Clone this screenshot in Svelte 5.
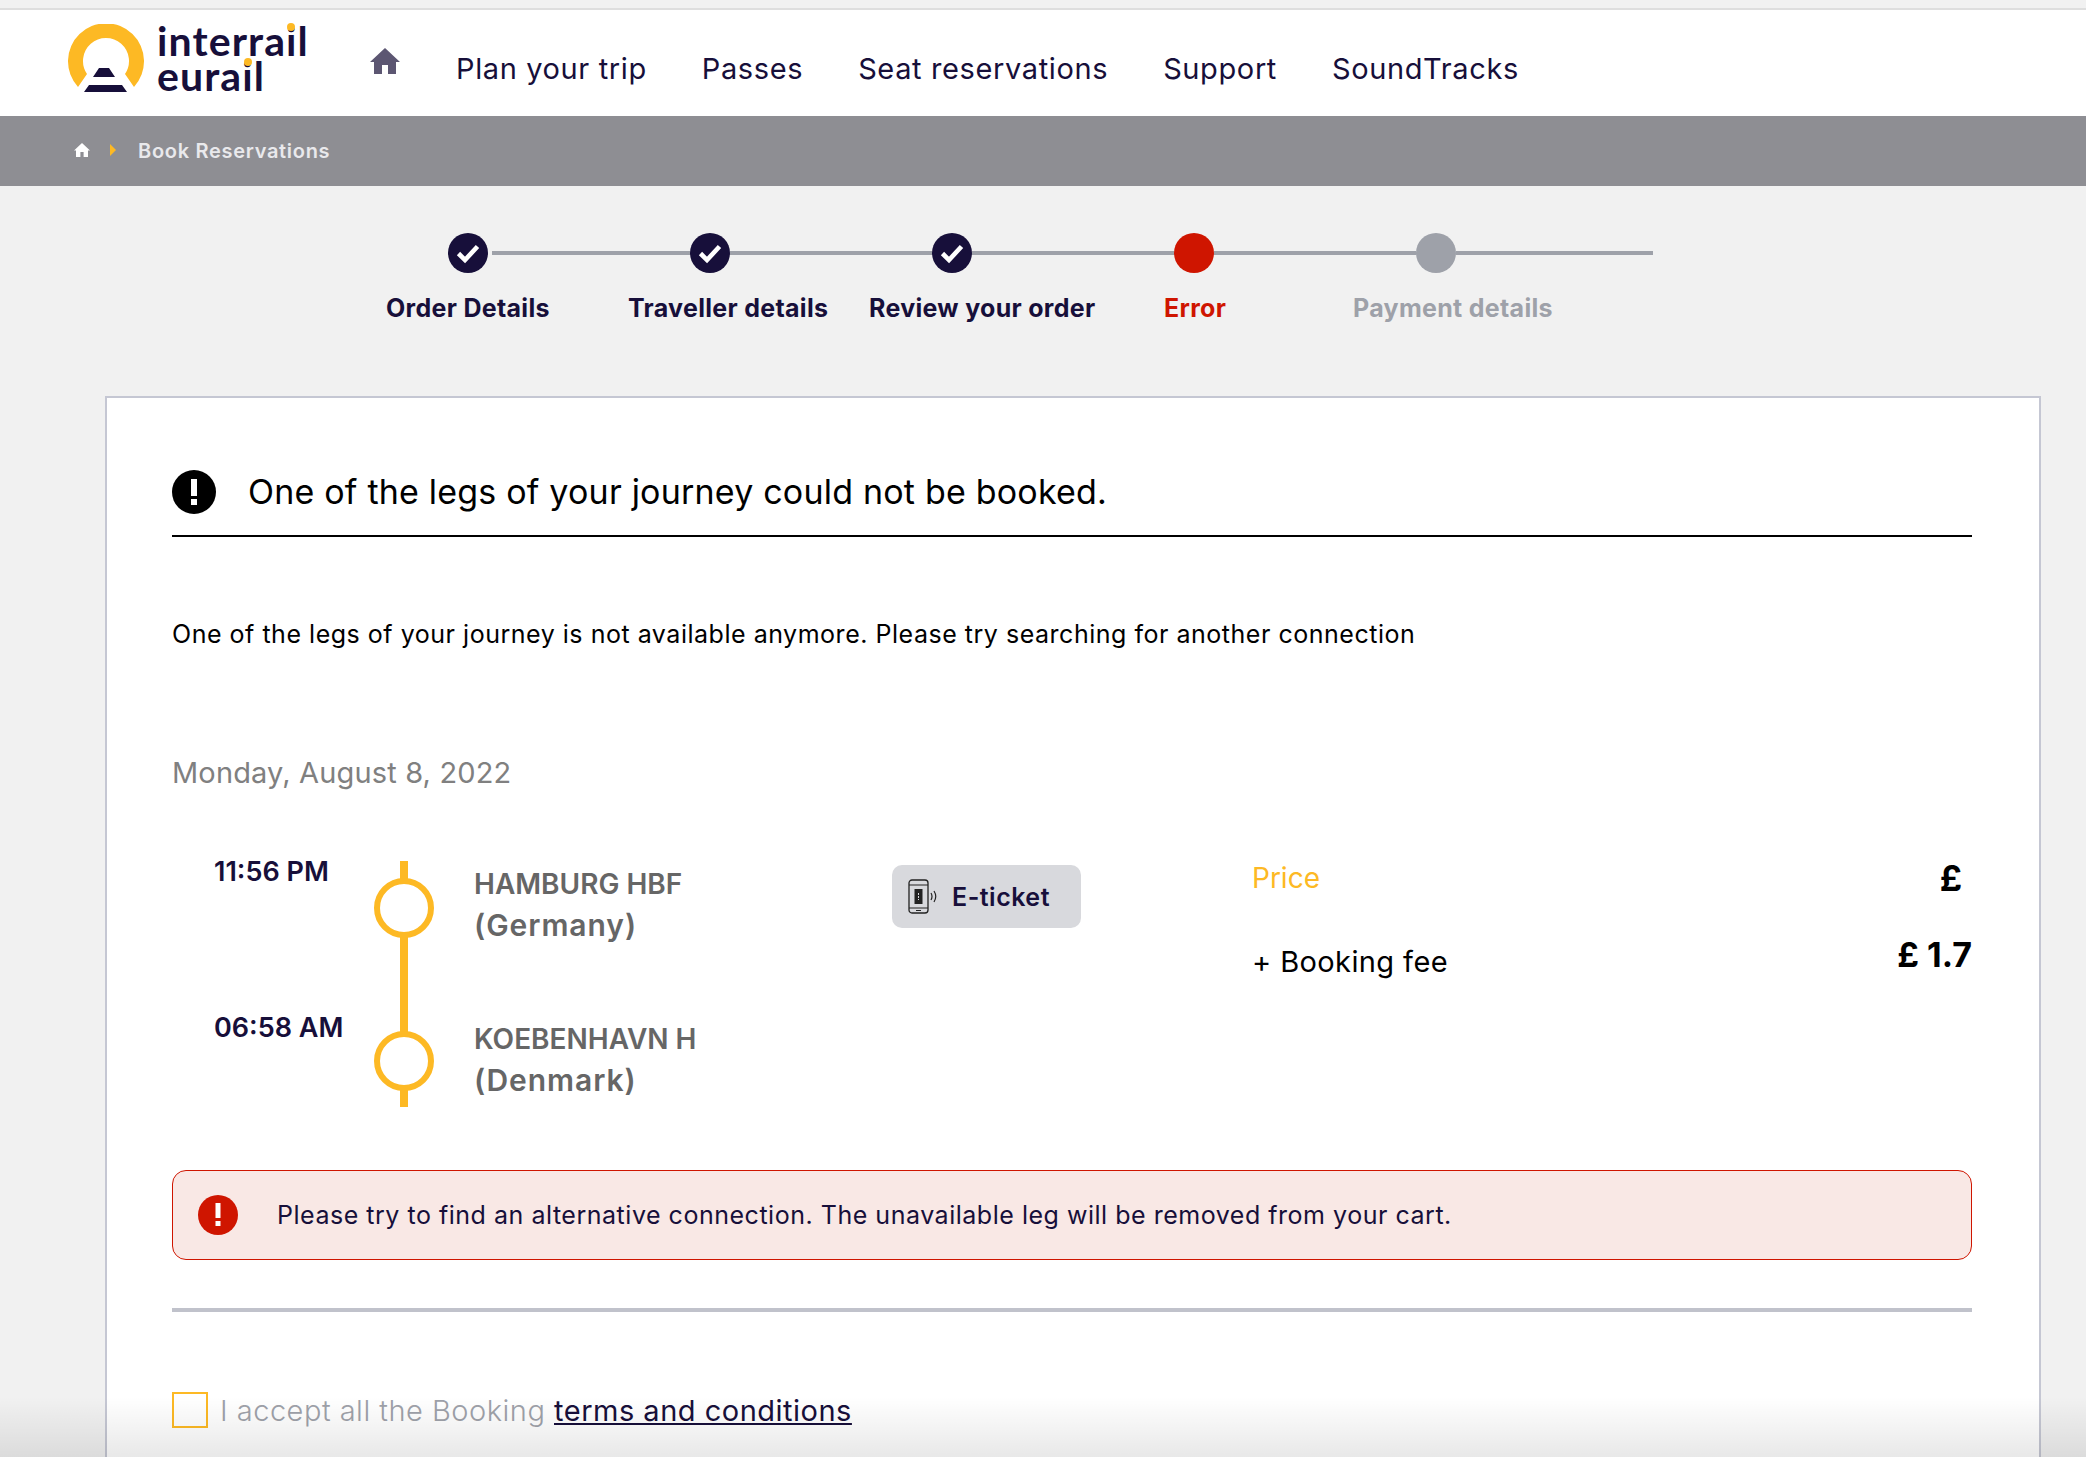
<script>
  const nav = ['Plan your trip', 'Passes', 'Seat reservations', 'Support', 'SoundTracks'];
  const steps = ['done', 'done', 'done', 'error', 'todo'];
  const labels = [
    ['Order Details', 'done'],
    ['Traveller details', 'done'],
    ['Review your order', 'done'],
    ['Error', 'error'],
    ['Payment details', 'todo']
  ];
</script>

<div class="page">
  <header class="topbar">
    <a class="logo" href="#home" aria-label="Interrail Eurail">
      <svg class="mark" viewBox="0 0 76 70" width="76" height="70" aria-hidden="true">
        <path d="M10 63 A38 38 0 1 1 66 63 L57 50 A23 23 0 1 0 19 50 Z" fill="#fdb924" />
        <path d="M31 44 H41 L47 53 H25 Z M21 61 H54 L59 68 H16 Z" fill="#170f3a" />
      </svg>
      <span class="wordmark">
        <span>interra<span class="yi">i</span>l</span>
        <span>eura<span class="yi">i</span>l</span>
      </span>
    </a>
    <svg class="home" viewBox="0 0 30 26" width="30" height="26" aria-hidden="true">
      <path d="M15 0 L30 14 H26 V26 H18 V17 H12 V26 H4 V14 H0 Z" fill="#5c5672" />
    </svg>
    <nav>
      {#each nav as item}
        <a href="#nav">{item}</a>
      {/each}
    </nav>
  </header>

  <div class="crumbs">
    <svg viewBox="0 0 16 14" width="16" height="14" aria-hidden="true">
      <path d="M8 0 L16 7.5 H14 V14 H9.6 V9 H6.4 V14 H2 V7.5 H0 Z" fill="#fff" />
    </svg>
    <svg class="chev" viewBox="0 0 6 12" width="6" height="12" aria-hidden="true">
      <path d="M0 0 L6 6 L0 12 Z" fill="#fdb924" />
    </svg>
    <span>Book Reservations</span>
  </div>

  <section class="stepper">
    <div class="track">
      {#each steps as s, i}
        <span class="dot {s}">
          {#if s === 'done'}
            <svg viewBox="0 0 40 40" width="40" height="40" aria-hidden="true">
              <path d="M10.5 20.5 L17 27 L29.5 13.5" fill="none" stroke="#fff" stroke-width="4.6" />
            </svg>
          {/if}
        </span>
        <span class="bar" class:first={i === 0} class:last={i === steps.length - 1}></span>
      {/each}
    </div>
    <div class="labels">
      {#each labels as [text, state]}
        <span class={state}>{text}</span>
      {/each}
    </div>
  </section>

  <main class="card">
    <div class="title">
      <svg viewBox="0 0 44 44" width="44" height="44" aria-hidden="true">
        <circle cx="22" cy="22" r="22" fill="#000" />
        <rect x="19" y="9" width="6" height="17" fill="#fff" />
        <rect x="19" y="29" width="6" height="6" fill="#fff" />
      </svg>
      <h1>One of the legs of your journey could not be booked.</h1>
    </div>

    <p class="lead">One of the legs of your journey is not available anymore. Please try searching for another connection</p>

    <p class="date">Monday, August 8, 2022</p>

    <div class="journey">
      <div class="times">
        <b>11:56 PM</b>
        <b>06:58 AM</b>
      </div>
      <svg class="rail" viewBox="0 0 64 246" width="64" height="246" aria-hidden="true">
        <rect x="28" y="0" width="8" height="246" fill="#fdb924" />
        <circle cx="32" cy="47" r="27" fill="#fff" stroke="#fdb924" stroke-width="6" />
        <circle cx="32" cy="200" r="27" fill="#fff" stroke="#fdb924" stroke-width="6" />
      </svg>
      <div class="stations">
        <div>HAMBURG HBF<br /><span class="country">(Germany)</span></div>
        <div>KOEBENHAVN H<br /><span class="country">(Denmark)</span></div>
      </div>
      <div class="badge">
        <svg viewBox="0 0 30 36" width="30" height="36" aria-hidden="true">
          <rect x="1" y="1" width="19" height="33" rx="3" fill="none" stroke="#222" stroke-width="1.3" />
          <path d="M1 6 H20 M1 29 H20 M8 31.5 H13" stroke="#222" stroke-width="1.2" fill="none" />
          <path d="M6.5 10 H14.5 V25 H6.5 Z" fill="#222" />
          <path d="M10.5 14 V21" stroke="#d8d9dd" stroke-width="1" stroke-dasharray="2 1" />
          <path d="M23 14 Q25 17.5 23 21 M26 12 Q29.5 17.5 26 23" fill="none" stroke="#222" stroke-width="1.2" />
        </svg>
        <span>E-ticket</span>
      </div>
      <div class="prices">
        <div class="price-row top"><span class="price">Price</span><b class="pound">£</b></div>
        <div class="price-row"><span class="fee">+ Booking fee</span><b class="big">£ 1.7</b></div>
      </div>
    </div>

    <div class="alert">
      <svg viewBox="0 0 40 40" width="40" height="40" aria-hidden="true">
        <circle cx="20" cy="20" r="20" fill="#cf1500" />
        <rect x="17.5" y="8" width="5" height="15" fill="#fff" />
        <rect x="17.5" y="26" width="5" height="5" fill="#fff" />
      </svg>
      <span>Please try to find an alternative connection. The unavailable leg will be removed from your cart.</span>
    </div>

    <hr />

    <label class="accept">
      <span class="box"></span>
      <span>I accept all the Booking <a href="#terms">terms and conditions</a></span>
    </label>
  </main>

  <div class="fade"></div>
</div>

<style>
  :global(body) {
    margin: 0;
    background: #f1f1f1;
  }
  .page {
    position: relative;
    height: 1457px;
    overflow: hidden;
    font-family: Inter, "Noto Sans", sans-serif;
    color: #170f3a;
    background: #f1f1f1;
  }
  a {
    color: inherit;
    text-decoration: none;
  }
  .topbar {
    margin-top: 8px;
    border-top: 2px solid #dedede;
    height: 108px;
    background: #fff;
    display: flex;
    align-items: flex-start;
    box-sizing: border-box;
  }
  .logo {
    display: flex;
    margin: 14px 0 0 68px;
    width: 302px;
    gap: 13px;
  }
  .wordmark {
    display: flex;
    flex-direction: column;
    font-family: Lato, sans-serif;
    font-weight: 700;
    font-size: 41px;
    line-height: 35px;
    letter-spacing: 1.1px;
    margin-top: -1px;
  }
  .yi {
    position: relative;
  }
  .yi::after {
    content: "";
    position: absolute;
    left: 50%;
    top: 7px;
    width: 8px;
    height: 8px;
    margin-left: -4.5px;
    border-radius: 50%;
    background: #fdb924;
  }
  .home {
    margin-top: 38px;
  }
  nav {
    display: flex;
    gap: 55px;
    margin: 39px 0 0 56px;
    font-size: 29px;
    line-height: 40px;
    letter-spacing: 0.62px;
  }
  .crumbs {
    height: 70px;
    background: #8e8e93;
    display: flex;
    align-items: center;
    padding-left: 74px;
    color: #e9e9ec;
    font-size: 20px;
    font-weight: 600;
    letter-spacing: 0.7px;
  }
  .crumbs svg {
    margin-top: -2px;
  }
  .crumbs .chev {
    margin-left: 20px;
    margin-right: 22px;
  }
  .stepper {
    padding-top: 47px;
    height: 210px;
    box-sizing: border-box;
  }
  .track {
    display: flex;
    align-items: center;
    margin-left: 448px;
  }
  .dot {
    width: 40px;
    height: 40px;
    border-radius: 50%;
    flex: none;
  }
  .dot.done { background: #170f3a; }
  .dot.error { background: #cf1500; }
  .dot.todo { background: #9ea1a9; }
  .dot svg { display: block; }
  .bar {
    width: 202px;
    height: 4px;
    background: #9ea1a9;
  }
  .bar.first {
    width: 198px;
    margin-left: 4px;
  }
  .bar.last {
    width: 197px;
  }
  .labels {
    display: grid;
    grid-template-columns: 242px 241px 295px 189px auto;
    margin: 19px 0 0 386px;
    font-size: 25px;
    line-height: 32px;
    font-weight: 700;
    letter-spacing: 0.3px;
    white-space: nowrap;
  }
  .labels .error { color: #cf1500; }
  .labels .todo { color: #9ea1a9; }
  .card {
    margin: 0 45px 0 105px;
    height: 1200px;
    box-sizing: border-box;
    background: #fff;
    border: 2px solid #c5c7d3;
    padding: 0 67px 0 65px;
  }
  .title {
    display: flex;
    align-items: center;
    gap: 32px;
    height: 139px;
    padding-top: 51px;
    box-sizing: border-box;
    border-bottom: 2px solid #000;
    color: #000;
  }
  h1 {
    margin: 0;
    font-size: 34px;
    font-weight: 400;
    line-height: 44px;
    letter-spacing: 0.2px;
  }
  .lead {
    margin: 80px 0 0;
    font-size: 25px;
    line-height: 34px;
    color: #000;
    letter-spacing: 0.52px;
  }
  .date {
    margin: 104px 0 0;
    font-size: 29px;
    line-height: 36px;
    color: #808080;
    letter-spacing: 0.15px;
  }
  .journey {
    display: flex;
    margin-top: 70px;
    height: 246px;
  }
  .times {
    width: 158px;
    margin: -7px 0 0 42px;
    font-size: 27px;
    line-height: 36px;
    display: flex;
    flex-direction: column;
    gap: 120px;
    flex: none;
    white-space: nowrap;
  }
  .times b { font-weight: 600; }
  .rail { flex: none; }
  .stations {
    margin-left: 38px;
    width: 418px;
    flex: none;
    padding-top: 3px;
    font-size: 28px;
    line-height: 41px;
    font-weight: 600;
    color: #666;
    display: flex;
    flex-direction: column;
    gap: 72px;
    white-space: nowrap;
  }
  .country {
    font-size: 30px;
    letter-spacing: 0.95px;
  }
  .badge {
    width: 189px;
    height: 63px;
    margin-top: 4px;
    box-sizing: border-box;
    padding-left: 16px;
    gap: 14px;
    background: #d8d9dd;
    border-radius: 10px;
    display: flex;
    align-items: center;
    font-size: 25px;
    font-weight: 600;
    letter-spacing: 0.5px;
    flex: none;
  }
  .prices {
    margin: -1px 0 0 171px;
    flex: 1;
    color: #000;
  }
  .price-row {
    display: flex;
    justify-content: space-between;
    align-items: center;
    height: 36px;
    margin-top: 47px;
  }
  .price-row.top {
    margin-top: 0;
  }
  .price-row b {
    font-size: 30px;
    font-weight: 700;
  }
  .price-row b.pound {
    font-size: 35px;
    margin-right: 10px;
  }
  .price-row b.big {
    font-size: 34px;
    margin-top: -14px;
  }
  .price {
    color: #fdb924;
    font-size: 28px;
  }
  .fee {
    font-size: 29px;
    letter-spacing: 0.4px;
  }
  .alert {
    margin-top: 63px;
    height: 90px;
    box-sizing: border-box;
    border: 1px solid #cf1500;
    border-radius: 14px;
    background: #f9e8e5;
    display: flex;
    align-items: center;
    gap: 39px;
    padding-left: 25px;
    font-size: 25px;
    letter-spacing: 0.52px;
  }
  hr {
    border: 0;
    height: 4px;
    background: #c0c2cb;
    margin: 48px 0 0;
  }
  .accept {
    display: flex;
    align-items: center;
    gap: 12px;
    margin-top: 80px;
    font-size: 29px;
    font-weight: 300;
    letter-spacing: 0.5px;
    color: #9ea1a9;
  }
  .box {
    width: 36px;
    height: 36px;
    box-sizing: border-box;
    border: 2px solid #fdb924;
    flex: none;
  }
  .accept a {
    color: #170f3a;
    font-weight: 400;
    text-decoration: underline;
  }
  .fade {
    position: absolute;
    left: 0;
    right: 0;
    bottom: 0;
    height: 60px;
    background: linear-gradient(to bottom, rgba(0, 0, 0, 0), rgba(0, 0, 0, 0.09));
    pointer-events: none;
  }
</style>
